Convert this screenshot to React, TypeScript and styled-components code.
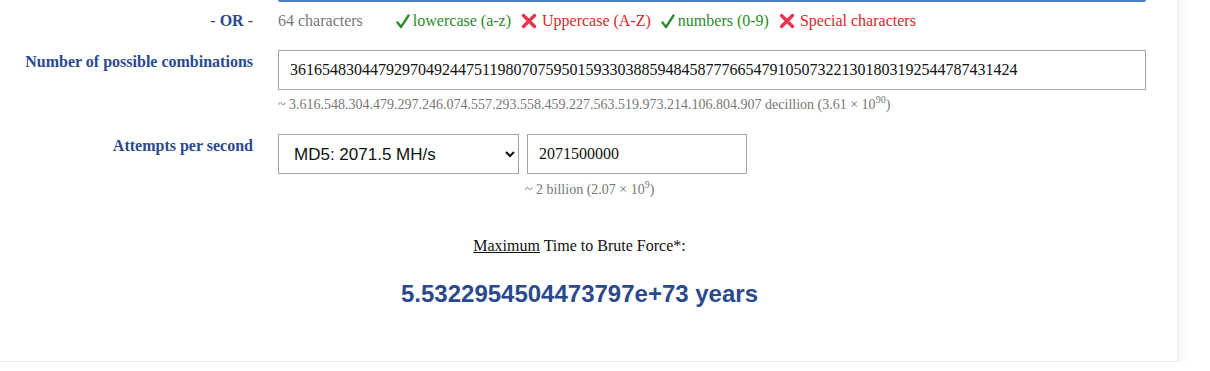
import React from 'react';
import styled, { createGlobalStyle } from 'styled-components';

const GlobalStyle = createGlobalStyle`
  html, body {
    margin: 0;
    padding: 0;
    background: #ffffff;
    overflow: hidden;
  }
  body {
    font-family: "Liberation Serif", "Times New Roman", serif;
  }
`;

const Card = styled.div`
  width: 1196px;
  margin: -42px 0 0 -18px;
  height: 404px;
  box-sizing: border-box;
  background: #ffffff;
  border-bottom: 1px solid #e6e6e6;
  border-right: 1px solid #ececec;
  box-shadow: 0 3px 12px rgba(0, 0, 0, 0.09);
  display: flex;
  flex-direction: column;
`;

const Form = styled.div`
  display: grid;
  grid-template-columns: 271px 1fr;
  column-gap: 25px;
  align-items: start;
`;

const Label = styled.div<{ $top?: number }>`
  text-align: right;
  font-weight: bold;
  font-size: 16px;
  color: #2b4a8d;
  padding-top: ${(p) => p.$top ?? 0}px;
`;

const Dash = styled.span`
  font-weight: normal;
  color: #444;
`;

const Field = styled.div<{ $top: number }>`
  display: flex;
  flex-direction: column;
  margin-top: ${(p) => p.$top}px;
`;

const FocusedInput = styled.div`
  width: 868px;
  height: 44px;
  box-sizing: border-box;
  border: 2px solid #4b7fc0;
  border-radius: 2px;
  grid-column: 2;
`;

const CharsetRow = styled.div`
  display: flex;
  align-items: center;
  height: 38px;
  font-size: 16px;
`;

const Count = styled.span`
  color: #777777;
  margin-right: 33px;
`;

const Charset = styled.span<{ $ok: boolean }>`
  display: inline-flex;
  align-items: center;
  gap: ${(p) => (p.$ok ? 3 : 5)}px;
  color: ${(p) => (p.$ok ? '#2c8a2c' : '#e0242e')};
  margin-right: 10px;
`;

const BigInput = styled.input`
  width: 868px;
  height: 40px;
  box-sizing: border-box;
  border: 1px solid #a3a6ad;
  padding: 0 11px;
  font-family: "Liberation Serif", "Times New Roman", serif;
  font-size: 16px;
  color: #111;
  outline: none;
`;

const Hint = styled.div<{ $indent?: number; $top: number }>`
  font-size: 14px;
  line-height: 16px;
  color: #777777;
  margin-top: ${(p) => p.$top}px;
  padding-left: ${(p) => p.$indent ?? 0}px;
  sup {
    font-size: 10px;
    line-height: 0;
  }
`;

const SpeedRow = styled.div`
  display: flex;
  gap: 8px;
`;

const Select = styled.select`
  width: 241px;
  height: 40px;
  box-sizing: border-box;
  border: 1px solid #a3a6ad;
  background: #fff;
  padding: 0 11px;
  font-family: "Liberation Sans", Arial, sans-serif;
  font-size: 17px;
  color: #111;
  border-radius: 0;
`;

const SpeedInput = styled.input`
  width: 220px;
  height: 40px;
  box-sizing: border-box;
  border: 1px solid #a3a6ad;
  padding: 0 11px;
  font-family: "Liberation Serif", "Times New Roman", serif;
  font-size: 16px;
  color: #111;
  outline: none;
`;

const Result = styled.div`
  display: flex;
  flex-direction: column;
  align-items: center;
  margin-top: 39px;
`;

const ResultTitle = styled.div`
  font-size: 16px;
  line-height: 18px;
  color: #111;
  u {
    text-decoration: underline;
  }
`;

const ResultValue = styled.div`
  margin-top: 25px;
  font-family: "Liberation Sans", Arial, sans-serif;
  font-weight: bold;
  font-size: 24px;
  line-height: 28px;
  color: #2b4a8d;
`;

function Check() {
  return (
    <svg width="14" height="15" viewBox="0 0 14 15">
      <path d="M1.5 8.5 L5 13 L12.5 1.5" fill="none" stroke="#2c8a2c" strokeWidth="2.3" strokeLinecap="round" strokeLinejoin="round" />
    </svg>
  );
}

function Cross() {
  return (
    <svg width="16" height="16" viewBox="0 0 16 16">
      <path d="M2.5 2.5 L13.5 13.5 M13.5 2.5 L2.5 13.5" fill="none" stroke="#ea3350" strokeWidth="3.4" strokeLinecap="round" />
    </svg>
  );
}

const charsets = [
  { ok: true, text: 'lowercase (a-z)' },
  { ok: false, text: 'Uppercase (A-Z)' },
  { ok: true, text: 'numbers (0-9)' },
  { ok: false, text: 'Special characters' },
];

export default function App() {
  return (
    <>
      <GlobalStyle />
      <Card>
        <Form>
          <FocusedInput />
          <Label $top={10}>
            <Dash>- </Dash>OR<Dash> -</Dash>
          </Label>
          <CharsetRow>
            <Count>64 characters</Count>
            {charsets.map((c) => (
              <Charset key={c.text} $ok={c.ok}>
                {c.ok ? <Check /> : <Cross />}
                {c.text}
              </Charset>
            ))}
          </CharsetRow>

          <Label $top={13}>Number of possible combinations</Label>
          <Field $top={10}>
            <BigInput readOnly value="3616548304479297049244751198070759501593303885948458777665479105073221301803192544787431424" />
            <Hint $top={7}>
              ~ 3.616.548.304.479.297.246.074.557.293.558.459.227.563.519.973.214.106.804.907 decillion (3.61 × 10<sup>90</sup>)
            </Hint>
          </Field>

          <Label $top={24}>Attempts per second</Label>
          <Field $top={21}>
            <SpeedRow>
              <Select defaultValue="md5">
                <option value="md5">MD5: 2071.5 MH/s</option>
              </Select>
              <SpeedInput readOnly value="2071500000" />
            </SpeedRow>
            <Hint $top={8} $indent={247}>
              ~ 2 billion (2.07 × 10<sup>9</sup>)
            </Hint>
          </Field>
        </Form>
        <Result>
          <ResultTitle>
            <u>Maximum</u> Time to Brute Force*:
          </ResultTitle>
          <ResultValue>5.5322954504473797e+73 years</ResultValue>
        </Result>
      </Card>
    </>
  );
}
